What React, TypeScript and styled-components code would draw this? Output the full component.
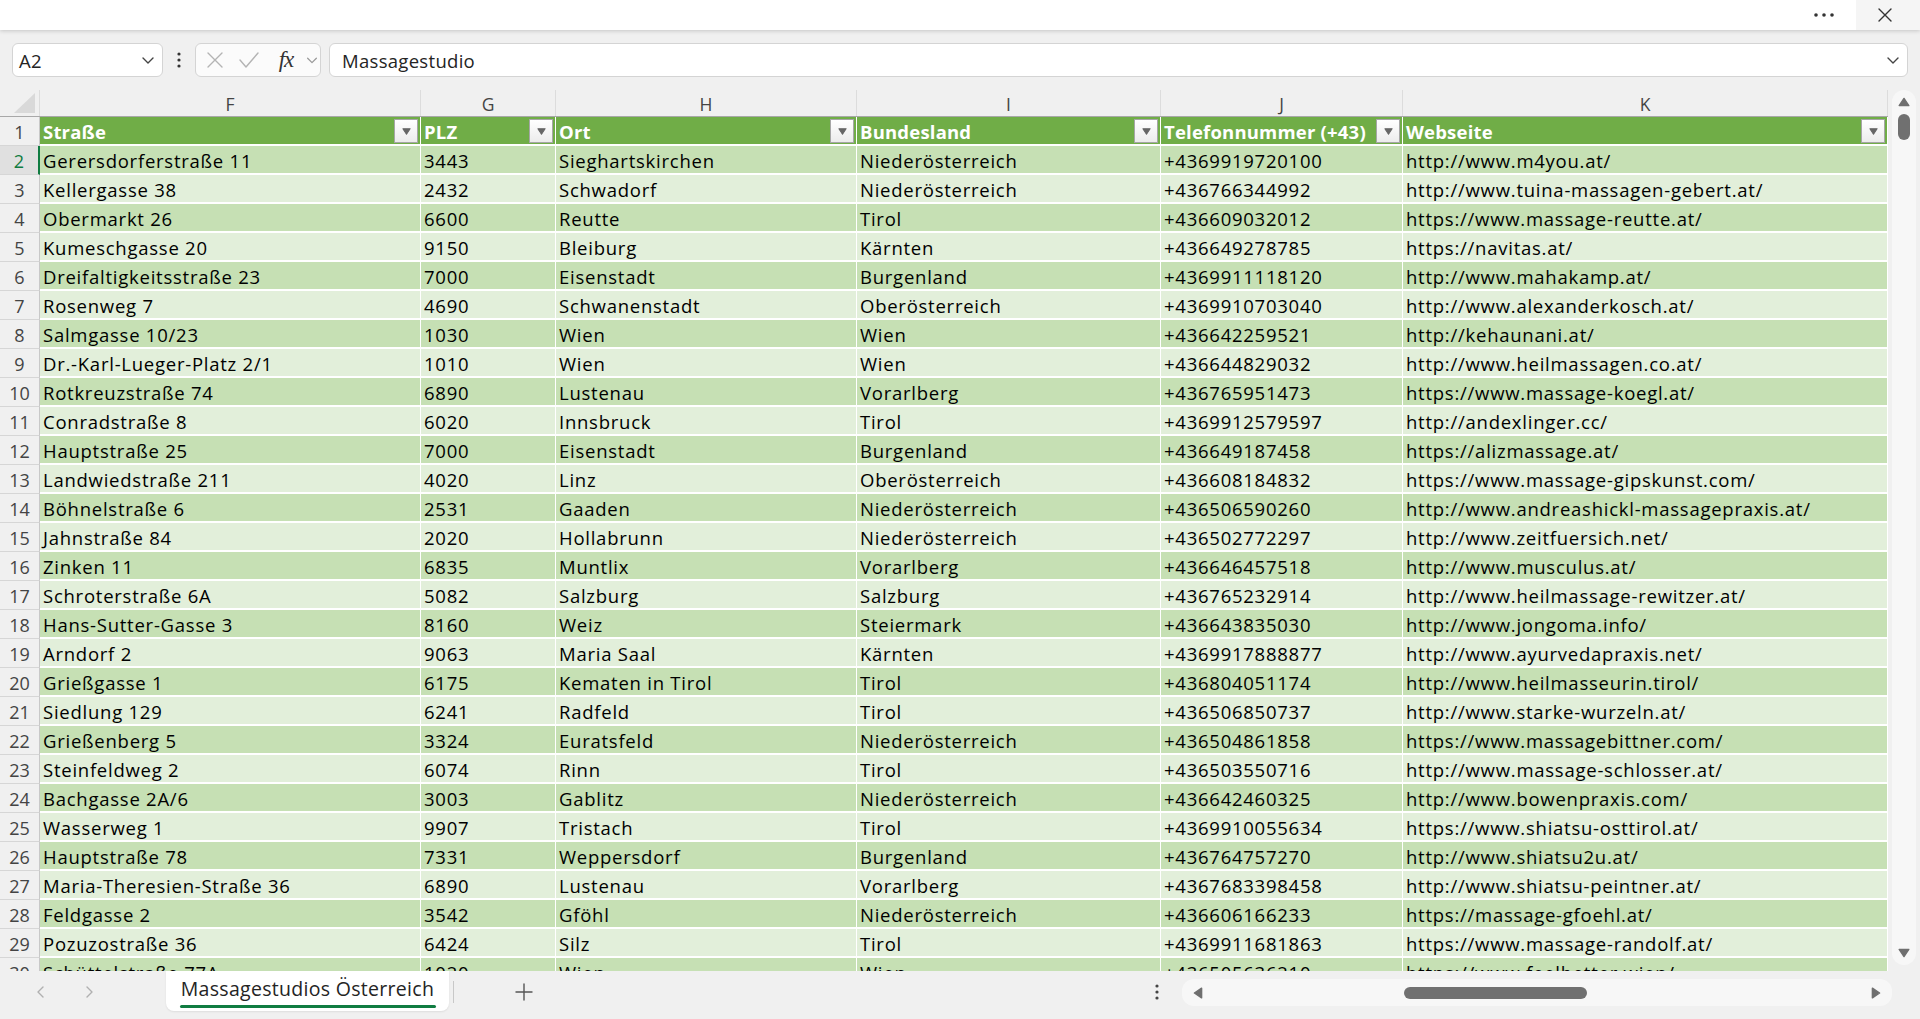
import React from 'react'
import styled, { createGlobalStyle } from 'styled-components'

const GlobalStyle = createGlobalStyle`
  html, body {
    margin: 0;
    padding: 0;
    background: #f0f0f0;
  }
  * {
    box-sizing: border-box;
  }
`

const COLS = '40px 381px 135px 301px 304px 242px 485px'
const CELL_FONT = `"Open Sans", "Noto Sans", sans-serif`

const Page = styled.div`
  width: 1920px;
  height: 1019px;
  display: flex;
  flex-direction: column;
  overflow: hidden;
  background: #f0f0f0;
  font-family: ${CELL_FONT};
  color: #242424;
`

const TopBar = styled.div`
  height: 30px;
  flex: none;
  background: #fff;
  display: flex;
  justify-content: flex-end;
  align-items: stretch;
  box-shadow: 0 1px 4px rgba(0, 0, 0, 0.18);
  position: relative;
  z-index: 2;
`

const TopButton = styled.div<{ $shade?: boolean }>`
  width: 64px;
  display: flex;
  align-items: center;
  justify-content: center;
  background: ${({ $shade }) => ($shade ? '#f5f5f5' : 'transparent')};
  color: #333;
  padding-right: ${({ $shade }) => ($shade ? '6px' : '0')};
`

const FormulaRow = styled.div`
  height: 60px;
  flex: none;
  display: flex;
  align-items: flex-start;
  padding: 13px 12px 0 12px;
`

const Box = styled.div<{ $w?: number; $grow?: boolean }>`
  height: 34px;
  background: #fff;
  border: 1px solid #d4d4d4;
  border-radius: 6px;
  display: flex;
  align-items: center;
  ${({ $w }) => ($w ? `width: ${$w}px;` : '')}
  ${({ $grow }) => ($grow ? 'flex: 1;' : '')}
`

const NameText = styled.span`
  flex: 1;
  padding-left: 6px;
  font-size: 18.5px;
  letter-spacing: 0.3px;
  color: #242424;
`

const BoxChevron = styled.span`
  width: 28px;
  display: flex;
  justify-content: center;
  color: #444;
`

const VDots = styled.div`
  width: 32px;
  height: 34px;
  display: flex;
  align-items: center;
  justify-content: center;
  color: #333;
`

const FxButtons = styled(Box)`
  margin-right: 8px;
  padding-left: 4px;
  background: #fbfbfb;
`

const IconSlot = styled.span<{ $w: number }>`
  width: ${({ $w }) => $w}px;
  display: flex;
  justify-content: center;
  align-items: center;
`

const FxText = styled.span`
  font-family: "Liberation Serif", "DejaVu Serif", serif;
  font-style: italic;
  font-size: 23px;
  color: #333;
  letter-spacing: -1px;
`

const FormulaText = styled.span`
  flex: 1;
  padding-left: 12px;
  font-size: 18.5px;
  letter-spacing: 0.3px;
  color: #242424;
`

const Main = styled.div`
  flex: 1;
  display: flex;
  min-height: 0;
`

const Sheet = styled.div`
  width: 1888px;
  display: flex;
  flex-direction: column;
  overflow: hidden;
  background: #fff;
`

const ColHeaderRow = styled.div`
  display: grid;
  grid-template-columns: ${COLS};
  height: 27px;
  flex: none;
  background: #f0f0f0;
  border-bottom: 1px solid #a8a8a8;
`

const Corner = styled.div`
  display: flex;
  align-items: flex-end;
  justify-content: flex-end;
  padding: 0 4px 3px 0;
  border-right: 1px solid #dcdcdc;
`

const ColLetter = styled.div`
  display: flex;
  align-items: center;
  justify-content: center;
  font-size: 17.5px;
  color: #444;
  border-right: 1px solid #dcdcdc;
  padding-top: 2px;
`

const Body = styled.div`
  flex: 1;
  overflow: hidden;
`

const Row = styled.div`
  display: grid;
  grid-template-columns: ${COLS};
  height: 29px;
`

const RowHead = styled.div<{ $active?: boolean }>`
  display: flex;
  align-items: center;
  justify-content: center;
  font-size: 18px;
  padding-top: 1px;
  color: ${({ $active }) => ($active ? '#107c41' : '#444')};
  background: ${({ $active }) => ($active ? '#e0e0e0' : '#f0f0f0')};
  border-bottom: 1px solid #d6d6d6;
  border-right: ${({ $active }) => ($active ? '2px solid #107c41' : '1px solid #c8c8c8')};
`

const Cell = styled.div<{ $bg: string; $head?: boolean }>`
  display: flex;
  align-items: center;
  justify-content: space-between;
  padding: 1px 2px 0 3px;
  background: ${({ $bg }) => $bg};
  border-bottom: 2px solid #fff;
  border-right: 1px solid #fff;
  font-size: 18.5px;
  letter-spacing: ${({ $head }) => ($head ? '0.2px' : '0.75px')};
  font-weight: ${({ $head }) => ($head ? 700 : 400)};
  color: ${({ $head }) => ($head ? '#fff' : '#000')};
  white-space: nowrap;
  overflow: hidden;
`

const FilterBtn = styled.span`
  width: 24px;
  height: 24px;
  flex: none;
  border: 1px solid #a6a6a6;
  background: linear-gradient(#ffffff, #ececec);
  display: flex;
  align-items: center;
  justify-content: center;
`

const VScroll = styled.div`
  width: 32px;
  flex: none;
  padding: 0 4px 6px 4px;
  display: flex;
`

const VTrack = styled.div`
  flex: 1;
  background: #f7f7f7;
  border-radius: 12px;
  display: flex;
  flex-direction: column;
  align-items: center;
  padding: 6px 0 6px;
`

const VThumb = styled.div`
  width: 12px;
  height: 26px;
  border-radius: 6px;
  background: #707070;
  margin-top: 6px;
`

const Spacer = styled.div`
  flex: 1;
`

const BottomBar = styled.div`
  height: 48px;
  flex: none;
  display: flex;
  align-items: flex-start;
`

const NavArrows = styled.div`
  width: 166px;
  height: 42px;
  display: flex;
  align-items: center;
  padding-left: 33px;
  gap: 32px;
  color: #b0b0b0;
`

const Tab = styled.div`
  width: 283px;
  height: 40px;
  background: #fff;
  border-radius: 0 0 8px 8px;
  display: flex;
  flex-direction: column;
  align-items: center;
  justify-content: center;
  padding-top: 2px;
  box-shadow: 0 1px 2px rgba(0, 0, 0, 0.08);
`

const TabLabel = styled.span`
  font-size: 19.5px;
  letter-spacing: 0.3px;
  color: #242424;
  line-height: 24px;
`

const TabLine = styled.span`
  width: 256px;
  height: 3px;
  border-radius: 2px;
  background: #107c41;
  margin-top: 4px;
`

const TabSep = styled.div`
  width: 1px;
  height: 22px;
  background: #c8c8c8;
  margin: 10px 0 0 4px;
`

const AddBtn = styled.div`
  width: 140px;
  height: 42px;
  display: flex;
  align-items: center;
  justify-content: center;
  color: #555;
`

const BottomDots = styled.div`
  margin-left: auto;
  margin-right: 10px;
  width: 30px;
  height: 42px;
  display: flex;
  align-items: center;
  justify-content: center;
  color: #444;
`

const HTrack = styled.div`
  width: 710px;
  height: 27px;
  margin: 8px 28px 0 0;
  background: #f7f7f7;
  border-radius: 12px;
  display: flex;
  align-items: center;
  padding: 0 10px;
`

const HThumb = styled.div`
  width: 183px;
  height: 12px;
  border-radius: 6px;
  background: #707070;
  margin-left: 200px;
`

const Chevron = ({ size = 14, color = '#444', dir = 'down' }: { size?: number; color?: string; dir?: 'down' | 'left' | 'right' }) => {
  const d = dir === 'down' ? 'M3 6l5 5 5-5' : dir === 'left' ? 'M10 3L5 8l5 5' : 'M6 3l5 5-5 5'
  return (
    <svg width={size} height={size} viewBox="0 0 16 16" fill="none" stroke={color} strokeWidth="1.4" strokeLinecap="round" strokeLinejoin="round">
      <path d={d} />
    </svg>
  )
}

const Tri = ({ dir, color = '#6f6f6f', size = 10 }: { dir: 'up' | 'down' | 'left' | 'right'; color?: string; size?: number }) => {
  const pts = {
    up: '1,8 5,2 9,8',
    down: '1,2 5,8 9,2',
    left: '8,1 2,5 8,9',
    right: '2,1 8,5 2,9',
  }[dir]
  return (
    <svg width={size} height={size} viewBox="0 0 10 10">
      <polygon points={pts} fill={color} strokeLinejoin="round" stroke={color} strokeWidth="1.2" />
    </svg>
  )
}

const DotsV = () => (
  <svg width="4" height="16" viewBox="0 0 4 16">
    <circle cx="2" cy="2" r="1.6" fill="currentColor" />
    <circle cx="2" cy="8" r="1.6" fill="currentColor" />
    <circle cx="2" cy="14" r="1.6" fill="currentColor" />
  </svg>
)

const header = ['Straße', 'PLZ', 'Ort', 'Bundesland', 'Telefonnummer (+43)', 'Webseite']

const rows: string[][] = [
  ['Gerersdorferstraße 11', '3443', 'Sieghartskirchen', 'Niederösterreich', '+4369919720100', 'http://www.m4you.at/'],
  ['Kellergasse 38', '2432', 'Schwadorf', 'Niederösterreich', '+436766344992', 'http://www.tuina-massagen-gebert.at/'],
  ['Obermarkt 26', '6600', 'Reutte', 'Tirol', '+436609032012', 'https://www.massage-reutte.at/'],
  ['Kumeschgasse 20', '9150', 'Bleiburg', 'Kärnten', '+436649278785', 'https://navitas.at/'],
  ['Dreifaltigkeitsstraße 23', '7000', 'Eisenstadt', 'Burgenland', '+4369911118120', 'http://www.mahakamp.at/'],
  ['Rosenweg 7', '4690', 'Schwanenstadt', 'Oberösterreich', '+4369910703040', 'http://www.alexanderkosch.at/'],
  ['Salmgasse 10/23', '1030', 'Wien', 'Wien', '+436642259521', 'http://kehaunani.at/'],
  ['Dr.-Karl-Lueger-Platz 2/1', '1010', 'Wien', 'Wien', '+436644829032', 'http://www.heilmassagen.co.at/'],
  ['Rotkreuzstraße 74', '6890', 'Lustenau', 'Vorarlberg', '+436765951473', 'https://www.massage-koegl.at/'],
  ['Conradstraße 8', '6020', 'Innsbruck', 'Tirol', '+4369912579597', 'http://andexlinger.cc/'],
  ['Hauptstraße 25', '7000', 'Eisenstadt', 'Burgenland', '+436649187458', 'https://alizmassage.at/'],
  ['Landwiedstraße 211', '4020', 'Linz', 'Oberösterreich', '+436608184832', 'https://www.massage-gipskunst.com/'],
  ['Böhnelstraße 6', '2531', 'Gaaden', 'Niederösterreich', '+436506590260', 'http://www.andreashickl-massagepraxis.at/'],
  ['Jahnstraße 84', '2020', 'Hollabrunn', 'Niederösterreich', '+436502772297', 'http://www.zeitfuersich.net/'],
  ['Zinken 11', '6835', 'Muntlix', 'Vorarlberg', '+436646457518', 'http://www.musculus.at/'],
  ['Schroterstraße 6A', '5082', 'Salzburg', 'Salzburg', '+436765232914', 'http://www.heilmassage-rewitzer.at/'],
  ['Hans-Sutter-Gasse 3', '8160', 'Weiz', 'Steiermark', '+436643835030', 'http://www.jongoma.info/'],
  ['Arndorf 2', '9063', 'Maria Saal', 'Kärnten', '+4369917888877', 'http://www.ayurvedapraxis.net/'],
  ['Grießgasse 1', '6175', 'Kematen in Tirol', 'Tirol', '+436804051174', 'http://www.heilmasseurin.tirol/'],
  ['Siedlung 129', '6241', 'Radfeld', 'Tirol', '+436506850737', 'http://www.starke-wurzeln.at/'],
  ['Grießenberg 5', '3324', 'Euratsfeld', 'Niederösterreich', '+436504861858', 'https://www.massagebittner.com/'],
  ['Steinfeldweg 2', '6074', 'Rinn', 'Tirol', '+436503550716', 'http://www.massage-schlosser.at/'],
  ['Bachgasse 2A/6', '3003', 'Gablitz', 'Niederösterreich', '+436642460325', 'http://www.bowenpraxis.com/'],
  ['Wasserweg 1', '9907', 'Tristach', 'Tirol', '+4369910055634', 'https://www.shiatsu-osttirol.at/'],
  ['Hauptstraße 78', '7331', 'Weppersdorf', 'Burgenland', '+436764757270', 'http://www.shiatsu2u.at/'],
  ['Maria-Theresien-Straße 36', '6890', 'Lustenau', 'Vorarlberg', '+4367683398458', 'http://www.shiatsu-peintner.at/'],
  ['Feldgasse 2', '3542', 'Gföhl', 'Niederösterreich', '+436606166233', 'https://massage-gfoehl.at/'],
  ['Pozuzostraße 36', '6424', 'Silz', 'Tirol', '+4369911681863', 'https://www.massage-randolf.at/'],
  ['Schüttelstraße 77A', '1020', 'Wien', 'Wien', '+436505636210', 'https://www.feelbetter.wien/'],
]

const letters = ['F', 'G', 'H', 'I', 'J', 'K']

const App: React.FC = () => {
  return (
    <Page>
      <GlobalStyle />
      <TopBar>
        <TopButton>
          <svg width="20" height="4" viewBox="0 0 20 4">
            <circle cx="2" cy="2" r="1.8" fill="#333" />
            <circle cx="10" cy="2" r="1.8" fill="#333" />
            <circle cx="18" cy="2" r="1.8" fill="#333" />
          </svg>
        </TopButton>
        <TopButton $shade>
          <svg width="16" height="16" viewBox="0 0 16 16" stroke="#333" strokeWidth="1.4" strokeLinecap="round">
            <path d="M2 2l12 12M14 2L2 14" />
          </svg>
        </TopButton>
      </TopBar>

      <FormulaRow>
        <Box $w={151}>
          <NameText>A2</NameText>
          <BoxChevron><Chevron size={16} /></BoxChevron>
        </Box>
        <VDots><DotsV /></VDots>
        <FxButtons $w={126}>
          <IconSlot $w={30}>
            <svg width="18" height="18" viewBox="0 0 18 18" stroke="#b4b4b4" strokeWidth="1.4" strokeLinecap="round">
              <path d="M2 2l14 14M16 2L2 16" />
            </svg>
          </IconSlot>
          <IconSlot $w={38}>
            <svg width="22" height="18" viewBox="0 0 22 18" fill="none" stroke="#b4b4b4" strokeWidth="1.4" strokeLinecap="round" strokeLinejoin="round">
              <path d="M2 9l6 7L20 2" />
            </svg>
          </IconSlot>
          <IconSlot $w={36}><FxText>fx</FxText></IconSlot>
          <IconSlot $w={16}><Chevron size={14} color="#999" /></IconSlot>
        </FxButtons>
        <Box $grow>
          <FormulaText>Massagestudio</FormulaText>
          <BoxChevron><Chevron size={16} /></BoxChevron>
        </Box>
      </FormulaRow>

      <Main>
        <Sheet>
          <ColHeaderRow>
            <Corner>
              <svg width="21" height="20" viewBox="0 0 21 20">
                <polygon points="21,0 21,20 0,20" fill="#d9d9d9" />
              </svg>
            </Corner>
            {letters.map((l) => (
              <ColLetter key={l}>{l}</ColLetter>
            ))}
          </ColHeaderRow>
          <Body>
            <Row>
              <RowHead>1</RowHead>
              {header.map((h) => (
                <Cell key={h} $bg="#70ad47" $head>
                  <span>{h}</span>
                  <FilterBtn><Tri dir="down" size={9} color="#666" /></FilterBtn>
                </Cell>
              ))}
            </Row>
            {rows.map((r, i) => (
              <Row key={i}>
                <RowHead $active={i === 0}>{i + 2}</RowHead>
                {r.map((v, j) => (
                  <Cell key={j} $bg={i % 2 === 0 ? '#c6e0b4' : '#e2efda'}>
                    <span>{v}</span>
                  </Cell>
                ))}
              </Row>
            ))}
          </Body>
        </Sheet>
        <VScroll>
          <VTrack>
            <Tri dir="up" size={12} />
            <VThumb />
            <Spacer />
            <Tri dir="down" size={12} />
          </VTrack>
        </VScroll>
      </Main>

      <BottomBar>
        <NavArrows>
          <Chevron dir="left" size={16} color="#b0b0b0" />
          <Chevron dir="right" size={16} color="#b0b0b0" />
        </NavArrows>
        <Tab>
          <TabLabel>Massagestudios Österreich</TabLabel>
          <TabLine />
        </Tab>
        <TabSep />
        <AddBtn>
          <svg width="18" height="18" viewBox="0 0 18 18" stroke="#555" strokeWidth="1.4" strokeLinecap="round">
            <path d="M9 1v16M1 9h16" />
          </svg>
        </AddBtn>
        <BottomDots><DotsV /></BottomDots>
        <HTrack>
          <Tri dir="left" size={12} />
          <HThumb />
          <Spacer />
          <Tri dir="right" size={12} />
        </HTrack>
      </BottomBar>
    </Page>
  )
}

export default App
